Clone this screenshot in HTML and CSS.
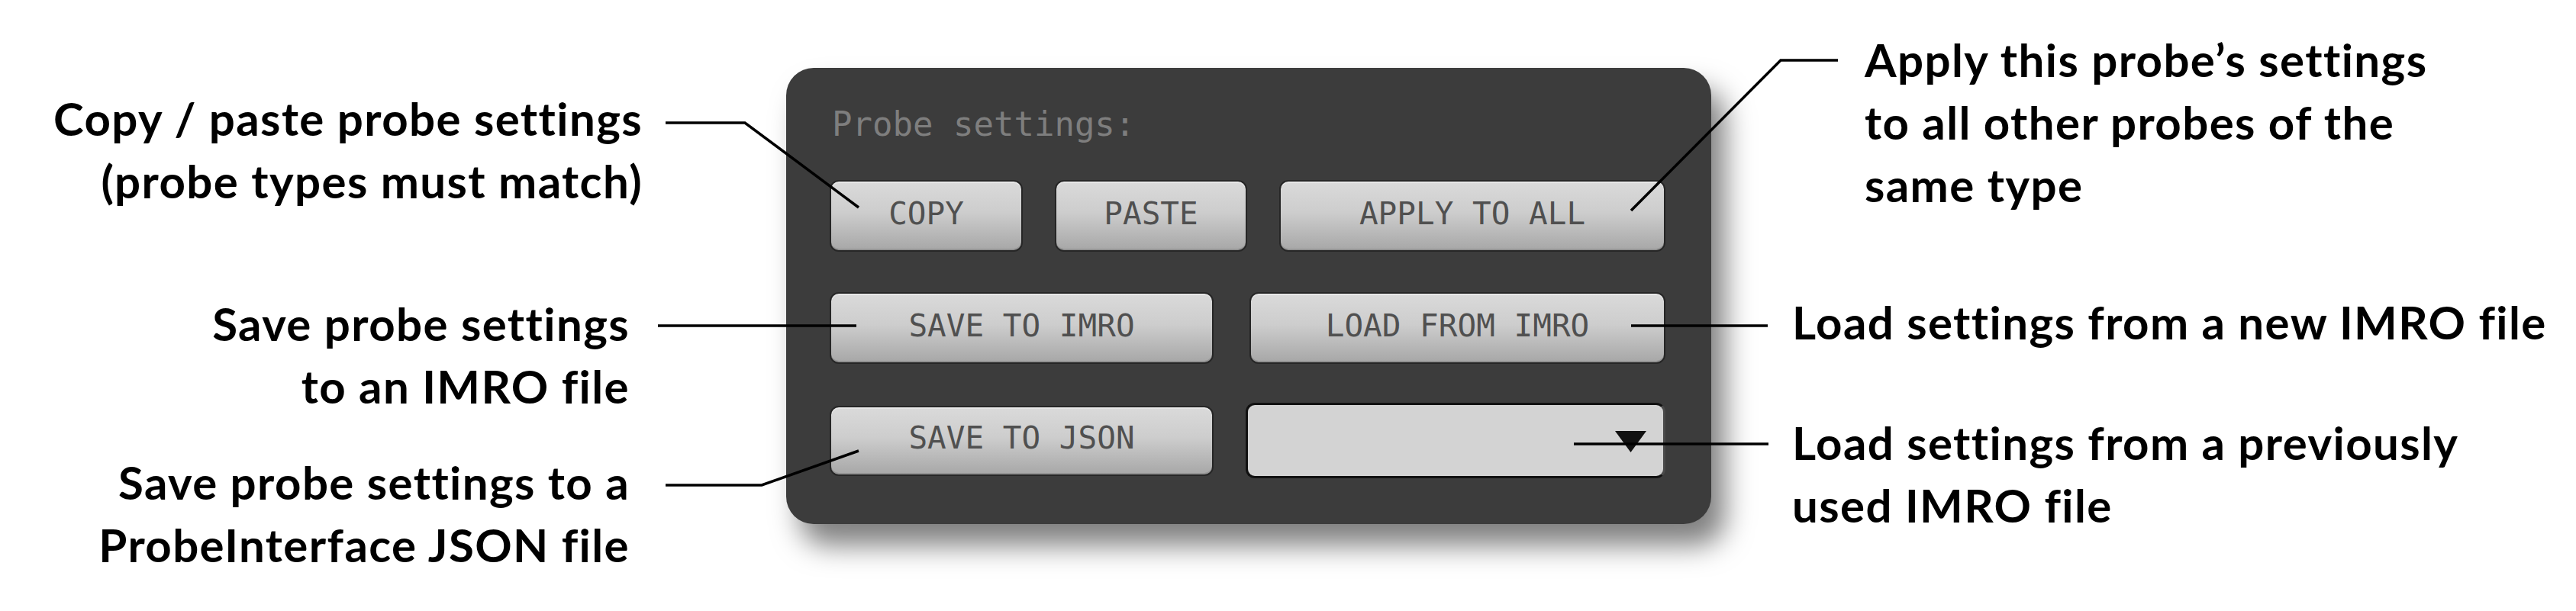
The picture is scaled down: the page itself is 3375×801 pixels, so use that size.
FILE: index.html
```html
<!DOCTYPE html>
<html lang="en">
<head>
<meta charset="utf-8">
<title>Probe settings</title>
<link rel="stylesheet" href="styles.css">
</head>
<body>
<div class="stage">
  <div class="col-left">
    <p class="note n1">Copy / paste probe settings<br>(probe types must match)</p>
    <p class="note n2">Save probe settings<br>to an IMRO file</p>
    <p class="note n3">Save probe settings to a<br>ProbeInterface JSON file</p>
  </div>

  <section class="panel">
    <h2 class="panel-title">Probe settings:</h2>
    <div class="row row-a">
      <button class="btn">COPY</button>
      <button class="btn">PASTE</button>
      <button class="btn">APPLY TO ALL</button>
    </div>
    <div class="row row-b">
      <button class="btn">SAVE TO IMRO</button>
      <button class="btn">LOAD FROM IMRO</button>
    </div>
    <div class="row row-c">
      <button class="btn btn-json">SAVE TO JSON</button>
      <div class="select">
        <svg class="caret" width="41" height="28" viewBox="0 0 41 28"><polygon points="0,0 41,0 20.5,28" fill="#111"/></svg>
      </div>
    </div>
  </section>

  <div class="col-right">
    <p class="note r1">Apply this probe’s settings<br>to all other probes of the<br>same type</p>
    <p class="note r2">Load settings from a new IMRO file</p>
    <p class="note r3">Load settings from a previously<br>used IMRO file</p>
  </div>

  <svg class="leaders" width="3375" height="801" viewBox="0 0 3375 801">
    <polyline points="872,161 976,161 1125,272"/>
    <polyline points="862,427 1122,427"/>
    <polyline points="872,636 998,636 1125,591"/>
    <polyline points="2137,276 2333,79 2408,79"/>
    <polyline points="2137,427 2316,427"/>
    <polyline points="2062,582 2317,582"/>
  </svg>
</div>
</body>
</html>
```

FILE: styles.css
```css
html, body {
  margin: 0;
  padding: 0;
  background: #ffffff;
}

.stage {
  position: relative;
  width: 3375px;
  height: 801px;
  display: flex;
  align-items: flex-start;
  overflow: hidden;
}

.note {
  margin: 0;
  font-family: Lato, "Liberation Sans", sans-serif;
  font-weight: 700;
  font-size: 60px;
  line-height: 82px;
  letter-spacing: 1.4px;
  color: #000;
  white-space: nowrap;
}

.col-left {
  width: 842px;
  flex: none;
  display: flex;
  flex-direction: column;
  align-items: flex-end;
  text-align: right;
}

.n1 { margin-top: 114px; }
.n2 { margin-top: 105px; padding-right: 17px; }
.n3 { margin-top: 44px; padding-right: 17px; }

.col-right {
  flex: none;
  margin-left: 106px;
  display: flex;
  flex-direction: column;
  align-items: flex-start;
}

.r1 { margin-top: 37px; padding-left: 95px; }
.r2 { margin-top: 98px; }
.r3 { margin-top: 76px; }

.panel {
  flex: none;
  box-sizing: border-box;
  width: 1212px;
  height: 598px;
  margin-left: 188px;
  margin-top: 89px;
  padding: 48px 60px 60px 57px;
  background: #3c3c3c;
  border-radius: 36px;
  box-shadow: 18px 28px 36px rgba(0, 0, 0, 0.5);
}

.panel-title {
  margin: 0;
  font-family: "DejaVu Sans Mono", monospace;
  font-weight: 400;
  font-size: 44px;
  line-height: 51px;
  color: #7e7e7e;
  padding-left: 3px;
}

.row {
  display: grid;
  align-items: center;
}

.row-a {
  margin-top: 48px;
  grid-template-columns: 253px 252px 1fr;
  column-gap: 42px;
}

.row-b {
  margin-top: 53px;
  grid-template-columns: 503px 1fr;
  column-gap: 47px;
}

.row-c {
  margin-top: 51px;
  grid-template-columns: 503px 1fr;
  column-gap: 42px;
}

.btn {
  box-sizing: border-box;
  height: 94px;
  margin: 0;
  padding: 0 0 6px 0;
  border: 2px solid #262626;
  border-radius: 12px;
  background: linear-gradient(#dadada 0%, #cdcdcd 45%, #a7a7a7 100%);
  box-shadow: inset 0 2px 0 rgba(255, 255, 255, 0.35), inset 0 -2px 0 rgba(0, 0, 0, 0.12);
  font-family: "DejaVu Sans Mono", monospace;
  font-size: 41px;
  line-height: 1;
  color: #505050;
  text-align: center;
}

.btn-json {
  height: 92px;
}

.select {
  box-sizing: border-box;
  height: 99px;
  border: 3px solid #111;
  border-right-color: #4a4a4a;
  border-radius: 12px;
  background: #d3d3d3;
  display: flex;
  align-items: center;
  justify-content: flex-end;
  padding-right: 22px;
}

.caret {
  display: block;
  margin-top: 2px;
}

.leaders {
  position: absolute;
  left: 0;
  top: 0;
  pointer-events: none;
  fill: none;
  stroke: #000;
  stroke-width: 3.5;
  stroke-linejoin: miter;
}
```
